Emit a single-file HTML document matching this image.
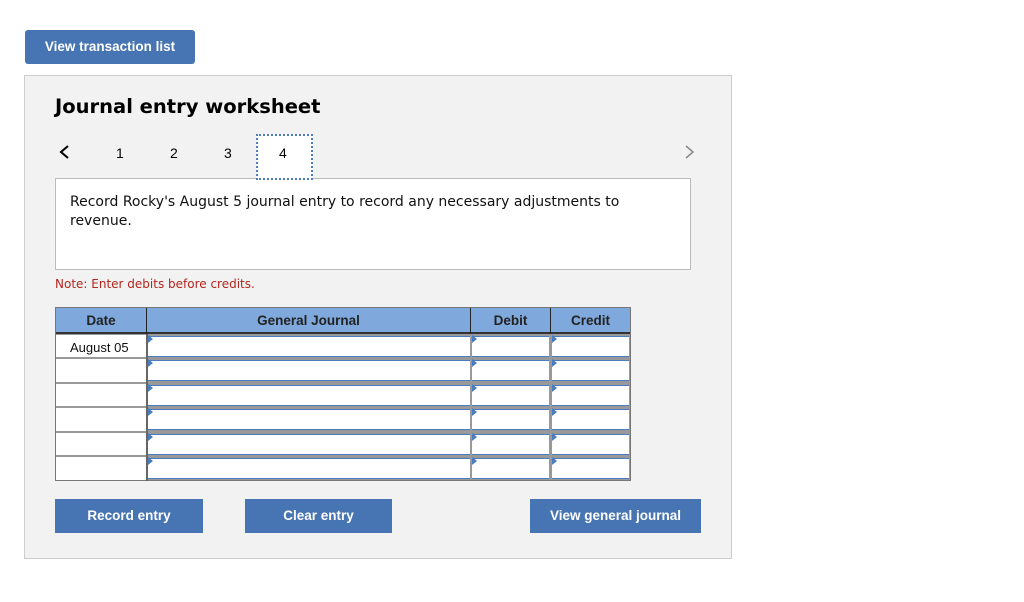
<!DOCTYPE html>
<html><head><meta charset="utf-8"><style>
*{margin:0;padding:0;box-sizing:border-box}
body{width:1024px;height:602px;background:#fff;position:relative;font-family:"Liberation Sans",Arial,sans-serif;overflow:hidden}
.a{position:absolute}
.btn{position:absolute;background:#4775b3;color:#fff;font-weight:bold;font-size:13.5px;text-align:center;border-radius:3px;font-family:"Liberation Sans",Arial,sans-serif;}
.v{font-family:"DejaVu Sans",Verdana,sans-serif}
.cell{position:absolute;background:#fff}
.tri{position:absolute;width:0;height:0;border-top:4px solid transparent;border-bottom:4px solid transparent;border-left:5px solid #4a7cc0}
</style></head><body>
<div class="btn" style="left:25px;top:30px;width:170px;height:34px;line-height:34px">View transaction list</div>
<div class="a" style="left:24px;top:75px;width:708px;height:484px;background:#f2f2f2;border:1px solid #ccc"></div>
<div class="a v" style="left:55px;top:95px;font-size:19.5px;font-weight:bold;color:#000">Journal entry worksheet</div>
<svg class="a" style="left:58px;top:144px" width="12" height="16"><path d="M10 2 L3 8 L10 14" stroke="#000" stroke-width="2" fill="none"/></svg>
<svg class="a" style="left:684px;top:144px" width="12" height="16"><path d="M2 2 L9 8 L2 14" stroke="#888" stroke-width="1.5" fill="none"/></svg>
<div class="a" style="left:116px;top:145px;font-size:14px">1</div>
<div class="a" style="left:170px;top:145px;font-size:14px">2</div>
<div class="a" style="left:224px;top:145px;font-size:14px">3</div>
<div class="a" style="left:55px;top:178px;width:636px;height:92px;background:#fff;border:1px solid #bbb"></div>
<div class="a" style="left:256px;top:134px;width:57px;height:46px;background:#fff;border:2px dotted #4a7cc0"></div>
<div class="a" style="left:279px;top:145px;font-size:14px">4</div>
<div class="a v" style="left:70px;top:193px;width:570px;font-size:14px;line-height:19px;color:#111">Record Rocky's August 5 journal entry to record any necessary adjustments to revenue.</div>
<div class="a v" style="left:55px;top:277px;font-size:12px;color:#b3261e">Note: Enter debits before credits.</div>
<div class="a" style="left:55px;top:307px;width:576px;height:174px;background:#999;border:1px solid #777"></div>
<div class="a" style="left:56px;top:308px;width:574px;height:26px;background:#7fa8dc;border-bottom:2px solid #333"></div>
<div class="a" style="left:146px;top:308px;width:1px;height:26px;background:#222"></div>
<div class="a" style="left:470px;top:308px;width:1px;height:26px;background:#222"></div>
<div class="a" style="left:550px;top:308px;width:1px;height:26px;background:#222"></div>
<div class="a" style="left:56px;top:313px;width:90px;text-align:center;font-size:13.5px;font-weight:bold;color:#222">Date</div>
<div class="a" style="left:147px;top:313px;width:323px;text-align:center;font-size:13.5px;font-weight:bold;color:#222">General Journal</div>
<div class="a" style="left:471px;top:313px;width:79px;text-align:center;font-size:13.5px;font-weight:bold;color:#222">Debit</div>
<div class="a" style="left:551px;top:313px;width:79px;text-align:center;font-size:13.5px;font-weight:bold;color:#222">Credit</div>
<div class="cell" style="left:56px;top:335px;width:90px;height:22px"></div>
<div class="cell" style="left:56px;top:359px;width:90px;height:23px"></div>
<div class="cell" style="left:56px;top:384px;width:90px;height:22px"></div>
<div class="cell" style="left:56px;top:408px;width:90px;height:23px"></div>
<div class="cell" style="left:56px;top:433px;width:90px;height:22px"></div>
<div class="cell" style="left:56px;top:457px;width:90px;height:23px"></div>
<div class="a" style="left:70px;top:340px;font-size:13px;color:#111">August 05</div>
<div class="a" style="left:146px;top:334px;width:2px;height:147px;background:#666"></div>
<div id="r"></div>
<script>
var tops=[335,359,384,408,433,457],cols=[[148,322],[472,77],[552,77]],h='';
tops.forEach(function(t){cols.forEach(function(c){h+='<div class="cell" style="left:'+c[0]+'px;top:'+(t+1)+'px;width:'+c[1]+'px;height:21px;border-top:1px solid #4a7cc0;border-bottom:1px solid #4a7cc0"></div><div class="tri" style="left:'+c[0]+'px;top:'+(t)+'px"></div>';});});
document.getElementById('r').outerHTML=h;
</script>
<div class="btn" style="left:55px;top:499px;width:148px;height:34px;line-height:34px;border-radius:0">Record entry</div>
<div class="btn" style="left:245px;top:499px;width:147px;height:34px;line-height:34px;border-radius:0">Clear entry</div>
<div class="btn" style="left:530px;top:499px;width:171px;height:34px;line-height:34px;border-radius:0">View general journal</div>
</body></html>
